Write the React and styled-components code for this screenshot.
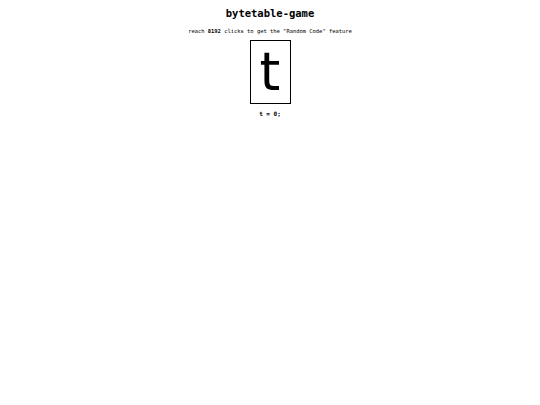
import React, { useState } from 'react';
import styled, { createGlobalStyle } from 'styled-components';

const GlobalStyle = createGlobalStyle`
  html, body {
    margin: 0;
    padding: 0;
    background: #ffffff;
    color: #000000;
    font-family: "DejaVu Sans Mono", "Liberation Mono", monospace;
  }
`;

const Page = styled.div`
  display: flex;
  flex-direction: column;
  align-items: center;
  padding-top: 7px;
`;

const Title = styled.h1`
  margin: 0;
  font-size: 10.5px;
  font-weight: bold;
  line-height: 13px;
`;

const Hint = styled.p`
  margin: 8px 0 0;
  font-size: 5.45px;
  line-height: 7px;
`;

const Tile = styled.button`
  margin-top: 5px;
  width: 41px;
  height: 64px;
  padding: 0;
  border: 1.5px solid #000;
  background: #fff;
  color: #000;
  font-family: "DejaVu Sans", "Noto Sans", sans-serif;
  font-size: 53px;
  line-height: 60px;
  cursor: pointer;
  display: flex;
  align-items: center;
  justify-content: center;
`;

const Counter = styled.div`
  margin-top: 6px;
  font-size: 6px;
  font-weight: bold;
  line-height: 8px;
`;

export default function App() {
  const [count, setCount] = useState(0);
  return (
    <>
      <GlobalStyle />
      <Page>
        <Title>bytetable-game</Title>
        <Hint>
          reach <b>8192</b> clicks to get the "Random Code" feature
        </Hint>
        <Tile onClick={() => setCount(count + 1)}>t</Tile>
        <Counter>t = {count};</Counter>
      </Page>
    </>
  );
}
